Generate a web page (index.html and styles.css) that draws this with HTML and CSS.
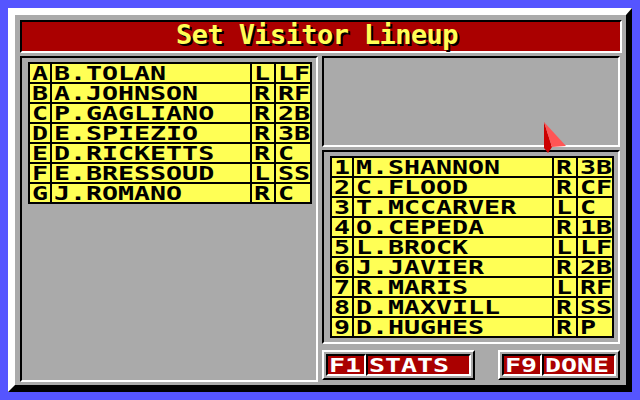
FILE: index.html
```html
<!DOCTYPE html>
<html>
<head>
<meta charset="utf-8">
<link rel="stylesheet" href="styles.css">
</head>
<body>
<div class="screen">
  <div class="frame">
    <div class="title"><span class="title-text">Set Visitor Lineup</span></div>
    <div class="main">
      <div class="panel left">
        <div class="table">
          <div class="c"><span class="t">A</span></div><div class="c"><span class="t">B.TOLAN</span></div><div class="c"><span class="t">L</span></div><div class="c"><span class="t">LF</span></div>
          <div class="c"><span class="t">B</span></div><div class="c"><span class="t">A.JOHNSON</span></div><div class="c"><span class="t">R</span></div><div class="c"><span class="t">RF</span></div>
          <div class="c"><span class="t">C</span></div><div class="c"><span class="t">P.GAGLIANO</span></div><div class="c"><span class="t">R</span></div><div class="c"><span class="t">2B</span></div>
          <div class="c"><span class="t">D</span></div><div class="c"><span class="t">E.SPIEZIO</span></div><div class="c"><span class="t">R</span></div><div class="c"><span class="t">3B</span></div>
          <div class="c"><span class="t">E</span></div><div class="c"><span class="t">D.RICKETTS</span></div><div class="c"><span class="t">R</span></div><div class="c"><span class="t">C</span></div>
          <div class="c"><span class="t">F</span></div><div class="c"><span class="t">E.BRESSOUD</span></div><div class="c"><span class="t">L</span></div><div class="c"><span class="t">SS</span></div>
          <div class="c"><span class="t">G</span></div><div class="c"><span class="t">J.ROMANO</span></div><div class="c"><span class="t">R</span></div><div class="c"><span class="t">C</span></div>
        </div>
      </div>
      <div class="rightcol">
        <div class="panel upper"></div>
        <div class="panel lower">
          <div class="table">
            <div class="c"><span class="t">1</span></div><div class="c"><span class="t">M.SHANNON</span></div><div class="c"><span class="t">R</span></div><div class="c"><span class="t">3B</span></div>
            <div class="c"><span class="t">2</span></div><div class="c"><span class="t">C.FLOOD</span></div><div class="c"><span class="t">R</span></div><div class="c"><span class="t">CF</span></div>
            <div class="c"><span class="t">3</span></div><div class="c"><span class="t">T.MCCARVER</span></div><div class="c"><span class="t">L</span></div><div class="c"><span class="t">C</span></div>
            <div class="c"><span class="t">4</span></div><div class="c"><span class="t">O.CEPEDA</span></div><div class="c"><span class="t">R</span></div><div class="c"><span class="t">1B</span></div>
            <div class="c"><span class="t">5</span></div><div class="c"><span class="t">L.BROCK</span></div><div class="c"><span class="t">L</span></div><div class="c"><span class="t">LF</span></div>
            <div class="c"><span class="t">6</span></div><div class="c"><span class="t">J.JAVIER</span></div><div class="c"><span class="t">R</span></div><div class="c"><span class="t">2B</span></div>
            <div class="c"><span class="t">7</span></div><div class="c"><span class="t">R.MARIS</span></div><div class="c"><span class="t">L</span></div><div class="c"><span class="t">RF</span></div>
            <div class="c"><span class="t">8</span></div><div class="c"><span class="t">D.MAXVILL</span></div><div class="c"><span class="t">R</span></div><div class="c"><span class="t">SS</span></div>
            <div class="c"><span class="t">9</span></div><div class="c"><span class="t">D.HUGHES</span></div><div class="c"><span class="t">R</span></div><div class="c"><span class="t">P</span></div>
          </div>
        </div>
        <div class="buttons">
          <div class="btn b1"><div class="cell key"><span class="t">F1</span></div><div class="cell lab1"><span class="t">STATS</span></div></div>
          <div class="btn b2"><div class="cell key"><span class="t">F9</span></div><div class="cell lab2"><span class="t">DONE</span></div></div>
        </div>
      </div>
    </div>
  </div>
  <svg class="cursor" width="30" height="38" viewBox="0 0 30 38">
    <polygon points="4,4 4,30 8,35 12,29" fill="#CC0000"/>
    <polygon points="4,4 26,28 12,29" fill="#FF5555"/>
  </svg>
</div>
</body>
</html>
```
FILE: styles.css
```css
body {
  margin: 0;
  background: #5555FF;
  width: 640px;
  height: 400px;
  overflow: hidden;
  font-family: "DejaVu Sans Mono", "Liberation Mono", monospace;
}
.screen {
  position: relative;
  width: 640px;
  height: 400px;
  padding: 8px;
  box-sizing: border-box;
}
.frame {
  width: 624px;
  height: 384px;
  box-sizing: border-box;
  border-style: solid;
  border-width: 7px 6px 7px 7px;
  border-color: #FFFFFF #000000 #000000 #FFFFFF;
  background: #AAAAAA;
  padding: 5px 4px 3px 5px;
  display: flex;
  flex-direction: column;
  gap: 3px;
}
.title {
  height: 33px;
  box-sizing: border-box;
  border: 2px solid;
  border-color: #000000 #FFFFFF #FFFFFF #000000;
  background: #AA0000;
  display: flex;
  justify-content: center;
  align-items: center;
  padding: 0 8px 5px 0;
}
.title-text {
  color: #FFFF55;
  font-weight: bold;
  font-size: 27px;
  line-height: 27px;
  letter-spacing: -0.6px;
  text-shadow: 2px 2px 0 #000000;
  white-space: nowrap;
}
.main {
  display: flex;
  gap: 4px;
  height: 326px;
}
.panel {
  box-sizing: border-box;
  border: 2px solid;
  border-color: #000000 #FFFFFF #FFFFFF #000000;
}
.left {
  width: 298px;
  height: 326px;
  padding: 4px 0 0 6px;
}
.rightcol {
  width: 298px;
  display: flex;
  flex-direction: column;
}
.upper {
  height: 91px;
}
.lower {
  height: 194px;
  margin-top: 3px;
  padding: 4px 0 0 6px;
}
.table {
  display: grid;
  grid-template-columns: 20px 198px 22px 34px;
  grid-auto-rows: 18px;
  gap: 2px;
  background: #000000;
  border: 2px solid #000000;
  width: max-content;
}
.c {
  background: #FFFF55;
  display: flex;
  align-items: center;
  padding-left: 2px;
}
.t {
  display: inline-block;
  transform: scaleX(1.4);
  transform-origin: 0 50%;
  font-weight: bold;
  font-size: 19px;
  line-height: 18px;
  color: #000000;
  white-space: nowrap;
}
.buttons {
  margin-top: 6px;
  display: flex;
  justify-content: space-between;
}
.btn {
  height: 30px;
  box-sizing: border-box;
  border: 2px solid;
  border-color: #FFFFFF #000000 #000000 #FFFFFF;
  padding: 2px;
  display: flex;
}
.b1 { width: 153px; }
.b2 { width: 122px; }
.cell {
  height: 22px;
  box-sizing: border-box;
  border: 2px solid;
  border-color: #000000 #FFFFFF #FFFFFF #000000;
  background: #AA0000;
  display: flex;
  align-items: center;
  padding-left: 1px;
}
.cell .t {
  color: #FFFFFF;
}
.key { width: 40px; }
.lab1 { width: 105px; }
.lab2 { width: 74px; }
.cursor {
  position: absolute;
  left: 540px;
  top: 118px;
}
```
